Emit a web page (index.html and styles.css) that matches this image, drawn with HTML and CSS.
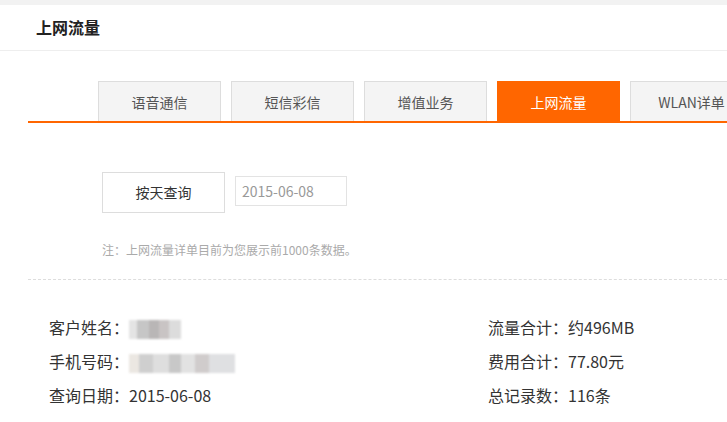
FILE: index.html
```html
<!DOCTYPE html>
<html lang="zh-CN">
<head>
    <meta charset="UTF-8">
    <meta name="viewport" content="width=device-width, initial-scale=1.0">
    <title>上网流量</title>
    <link rel="stylesheet" href="styles.css">
</head>
<body>
    <div class="topbar"></div>
    <div class="page-head">上网流量</div>

    <div class="main">
        <div class="tabs">
            <div class="tab">语音通信</div>
            <div class="tab">短信彩信</div>
            <div class="tab">增值业务</div>
            <div class="tab active">上网流量</div>
            <div class="tab">WLAN详单</div>
        </div>

        <div class="query">
            <div class="btn">按天查询</div>
            <div class="date">2015-06-08</div>
        </div>
        <p class="note">注：上网流量详单目前为您展示前1000条数据。</p>

        <div class="summary">
            <div class="col">
                <div class="row">客户姓名：<span class="mask mask-name"></span></div>
                <div class="row">手机号码：<span class="mask mask-phone"></span></div>
                <div class="row">查询日期：2015-06-08</div>
            </div>
            <div class="col col-right">
                <div class="row">流量合计：约496MB</div>
                <div class="row">费用合计：77.80元</div>
                <div class="row">总记录数：116条</div>
            </div>
        </div>
    </div>
</body>
</html>
```

FILE: styles.css
```css
body {
    margin: 0;
    font-family: "Noto Sans CJK SC", "Liberation Sans", sans-serif;
    color: #333;
    background: #fff;
    overflow: hidden;
}
.topbar {
    height: 5px;
    background-color: #f2f2f2;
}
.page-head {
    height: 45px;
    line-height: 45px;
    padding-left: 36px;
    font-size: 16px;
    font-weight: bold;
    color: #222;
    border-bottom: 1px solid #eee;
}
.main {
    padding-left: 28px;
}
/* tab strip is wider than the window; the last tab gets clipped */
.tabs {
    display: flex;
    gap: 10px;
    margin-top: 30px;
    padding-left: 70px;
    border-bottom: 2px solid #ff6600;
    white-space: nowrap;
    overflow: hidden;
}
.tab {
    flex: none;
    box-sizing: border-box;
    width: 123px;
    height: 40px;
    line-height: 40px;
    text-align: center;
    font-size: 14px;
    color: #555;
    background-color: #f4f4f4;
    border: 1px solid #ddd;
    border-bottom: none;
}
.tab.active {
    background-color: #ff6600;
    border-color: #ff6600;
    color: #fff;
}
.query {
    display: flex;
    align-items: flex-start;
    gap: 10px;
    margin-top: 49px;
    padding-left: 74px;
}
.btn {
    box-sizing: border-box;
    width: 123px;
    height: 41px;
    line-height: 39px;
    text-align: center;
    font-size: 14px;
    color: #333;
    border: 1px solid #ddd;
}
.date {
    box-sizing: border-box;
    width: 112px;
    height: 30px;
    margin-top: 4px;
    line-height: 28px;
    padding-left: 6px;
    font-size: 14px;
    color: #999;
    border: 1px solid #e3e3e3;
}
.note {
    margin: 28px 0 0;
    padding-left: 74px;
    font-size: 12px;
    line-height: 18px;
    color: #aaa;
}
.summary {
    display: flex;
    margin-top: 20px;
    padding: 30px 0 0 21px;
    border-top: 1px dashed #ddd;
}
.col {
    flex: none;
    width: 439px;
}
.col-right {
    flex: 1;
    width: auto;
}
.row {
    height: 34px;
    line-height: 34px;
    font-size: 16px;
    color: #333;
}
.mask {
    display: inline-block;
    height: 19px;
    vertical-align: middle;
    filter: blur(1px);
}
.mask-name {
    width: 52px;
    background:
        linear-gradient(90deg, #e4e4e4 0 8px, #c6c6c6 8px 20px, #b9b6b6 20px 30px, #c9c4c4 30px 40px, #dcdcdc 40px);
}
.mask-phone {
    width: 106px;
    background:
        linear-gradient(90deg, #ebe7e2 0 10px, #cfcfcf 10px 24px, #dedede 24px 40px, #c8c8c8 40px 52px, #e2e2e2 52px 66px, #d0cccc 66px 80px, #dfe0e2 80px);
}
```
